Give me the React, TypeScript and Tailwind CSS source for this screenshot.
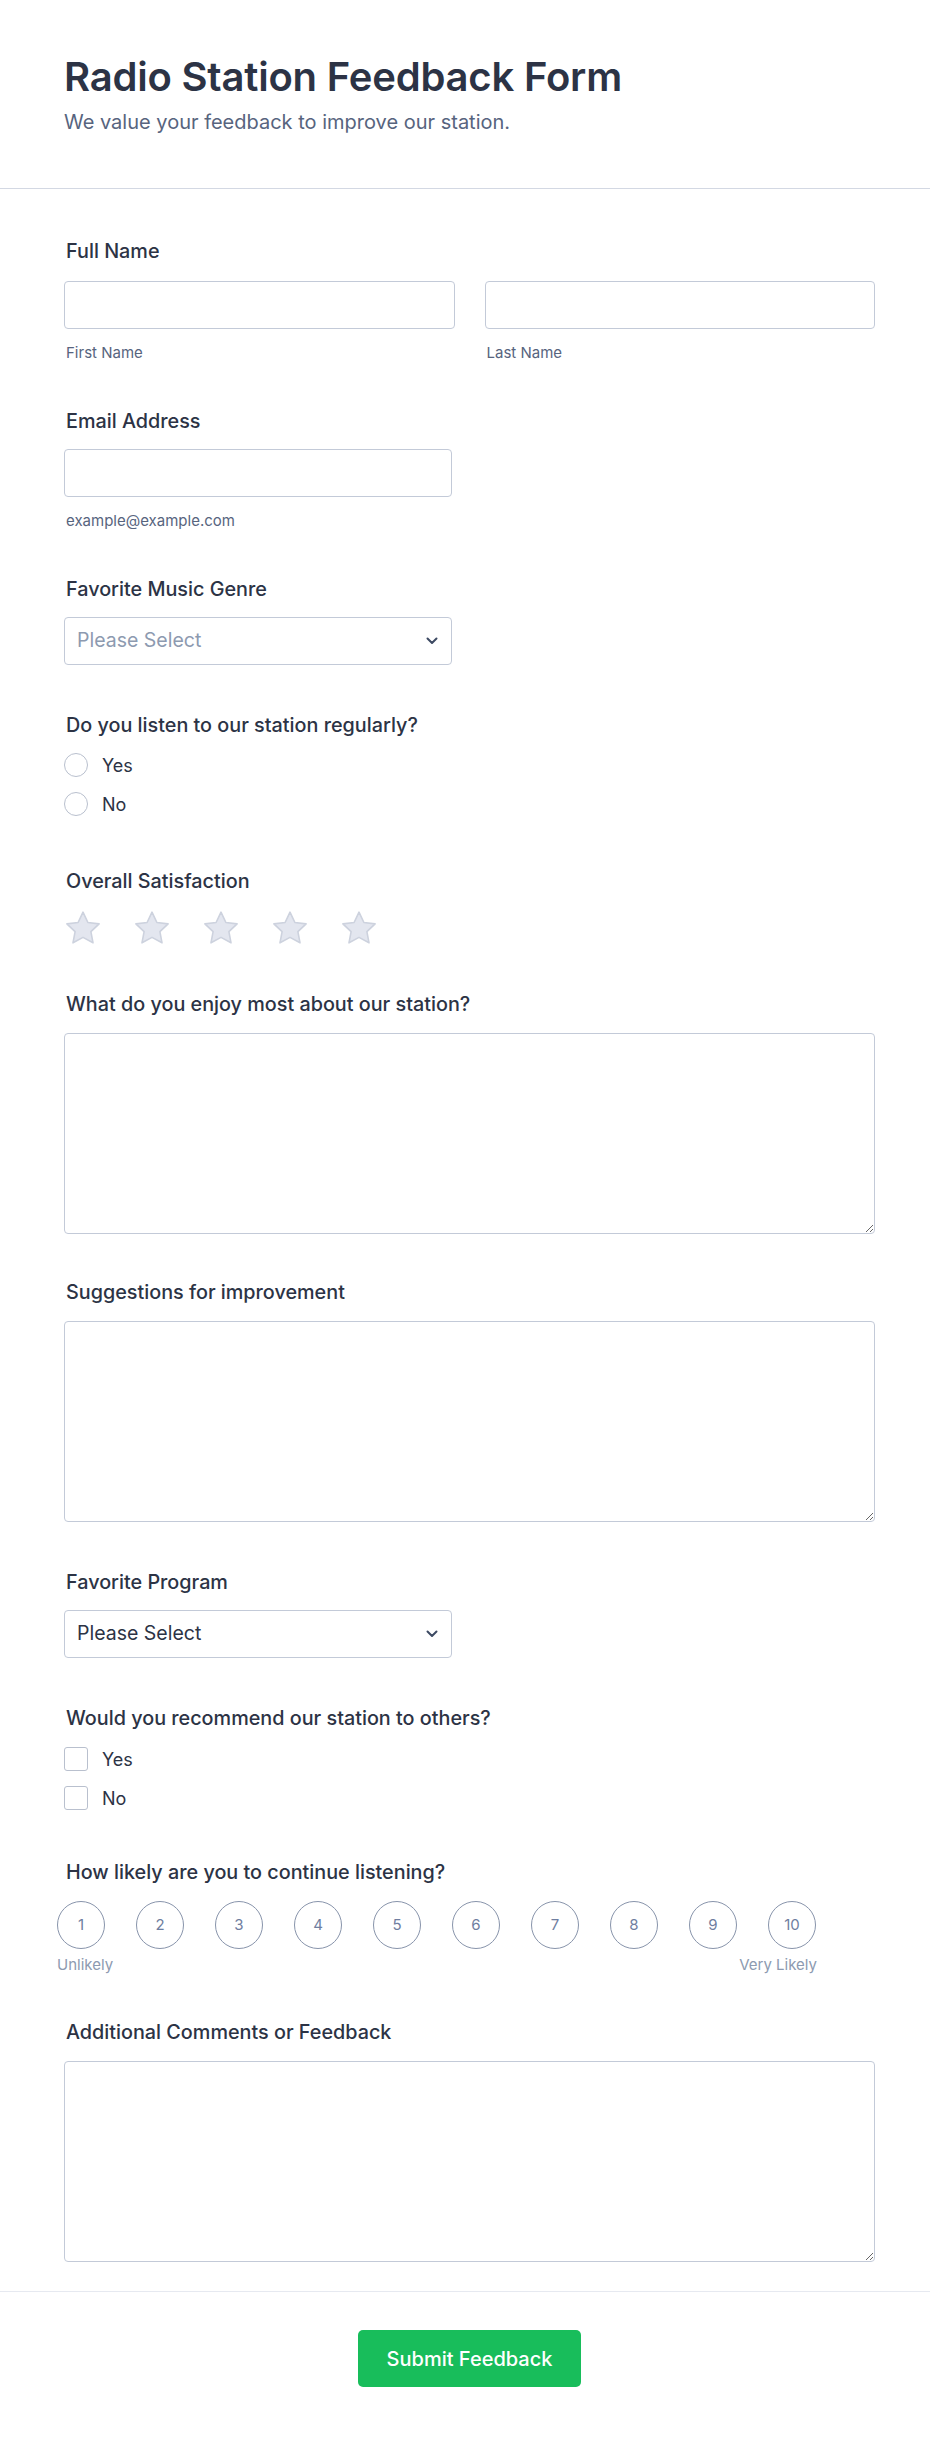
import React from "react";

const Label = ({ children, className = "" }: { children: React.ReactNode; className?: string }) => (
  <div className={`pl-0.5 text-[19.8px] leading-6 font-medium text-[#2c3345] ${className}`}>{children}</div>
);

const Chevron = () => (
  <svg width="12" height="8" viewBox="0 0 12 8" fill="none" className="absolute right-[14px] top-1/2 -translate-y-1/2">
    <path d="M1.5 1.5L6 6L10.5 1.5" stroke="#3d4a63" strokeWidth="2" strokeLinecap="round" strokeLinejoin="round" />
  </svg>
);

const Star = () => (
  <svg width="38" height="36" viewBox="0 0 38 36">
    <path
      d="M19 2.2l4.9 10.3 11.2 1.4-8.2 7.8 2.1 11.1L19 27.4 9 32.8l2.1-11.1-8.2-7.8 11.2-1.4z"
      fill="#e3e6ef"
      stroke="#cdd2de"
      strokeWidth="1.6"
      strokeLinejoin="round"
    />
  </svg>
);

const inputCls = "h-12 w-full rounded-[4px] border border-[#c3cad8] bg-white px-3 text-[19.5px] outline-none";
const subCls = "mt-[14px] pl-0.5 text-[15px] leading-5 text-[#57647e]";
const areaCls = "mt-[17px] block h-[201px] w-full rounded-[4px] border border-[#c3cad8] outline-none";

export default function App() {
  return (
    <div className="min-h-screen bg-white font-['Inter',sans-serif]">
      {/* Header */}
      <div className="border-b border-[#d3d8e3] pl-16 pr-[55px] pt-[53px] pb-[52px]">
        <h1 className="text-[40px] leading-[48px] font-semibold text-[#2c3345] tracking-[-0.2px]">Radio Station Feedback Form</h1>
        <p className="mt-[7px] text-[20px] leading-7 text-[#57647e]">We value your feedback to improve our station.</p>
      </div>

      {/* Form */}
      <div className="pl-16 pr-[55px] pt-[50px] pb-[29px]">
        {/* Full Name */}
        <Label>Full Name</Label>
        <div className="mt-[18px] grid grid-cols-2 gap-[30px]">
          <div>
            <input className={inputCls} />
            <div className={subCls}>First Name</div>
          </div>
          <div>
            <input className={inputCls} />
            <div className={subCls}>Last Name</div>
          </div>
        </div>

        {/* Email */}
        <Label className="mt-[46px]">Email Address</Label>
        <div className="mt-4 w-[388px]">
          <input className={inputCls} />
          <div className={subCls}>example@example.com</div>
        </div>

        {/* Genre */}
        <Label className="mt-[46px]">Favorite Music Genre</Label>
        <div className="relative mt-4 w-[388px]">
          <div className={`${inputCls} flex items-center text-[#8d9ab0]`}>Please Select</div>
          <Chevron />
        </div>

        {/* Radio */}
        <Label className="mt-[48px]">Do you listen to our station regularly?</Label>
        <div className="mt-4 flex flex-col gap-[15px]">
          {["Yes", "No"].map((o) => (
            <div key={o} className="flex h-6 items-center gap-[14px]">
              <span className="h-6 w-6 rounded-full border border-[#b9c0ce] bg-white" />
              <span className="text-[18px] text-[#2c3345]">{o}</span>
            </div>
          ))}
        </div>

        {/* Stars */}
        <Label className="mt-[53px]">Overall Satisfaction</Label>
        <div className="mt-[17px] flex gap-[31px]">
          {[1, 2, 3, 4, 5].map((i) => (
            <Star key={i} />
          ))}
        </div>

        {/* Enjoy */}
        <Label className="mt-[46px]">What do you enjoy most about our station?</Label>
        <textarea className={areaCls} />

        {/* Suggestions */}
        <Label className="mt-[46px]">Suggestions for improvement</Label>
        <textarea className={areaCls} />

        {/* Program */}
        <Label className="mt-[48px]">Favorite Program</Label>
        <div className="relative mt-4 w-[388px]">
          <div className={`${inputCls} flex items-center text-[#2c3345]`}>Please Select</div>
          <Chevron />
        </div>

        {/* Checkbox */}
        <Label className="mt-[48px]">Would you recommend our station to others?</Label>
        <div className="mt-[17px] flex flex-col gap-[15px]">
          {["Yes", "No"].map((o) => (
            <div key={o} className="flex h-6 items-center gap-[14px]">
              <span className="h-6 w-6 rounded-[3px] border border-[#b9c0ce] bg-white" />
              <span className="text-[18px] text-[#2c3345]">{o}</span>
            </div>
          ))}
        </div>

        {/* Scale */}
        <Label className="mt-[50px]">How likely are you to continue listening?</Label>
        <div className="-ml-[7px] mt-[17px] w-[760px]">
          <div className="flex gap-[31px]">
            {[1, 2, 3, 4, 5, 6, 7, 8, 9, 10].map((n) => (
              <div
                key={n}
                className="flex h-12 w-12 items-center justify-center rounded-full border border-[#8894ab] text-[15px] text-[#6f7ea0]"
              >
                {n}
              </div>
            ))}
          </div>
          <div className="mt-[6px] flex justify-between text-[15px] leading-5 text-[#8d9ab0]">
            <span>Unlikely</span>
            <span>Very Likely</span>
          </div>
        </div>

        {/* Additional */}
        <Label className="mt-[45px]">Additional Comments or Feedback</Label>
        <textarea className={areaCls} />
      </div>

      {/* Footer */}
      <div className="flex justify-center border-t border-[#e6e9f0] pl-16 pr-[55px] pt-[38px] pb-[51px]">
        <button className="h-[57px] w-[223px] rounded-[5px] bg-[#18bd5b] text-[20px] font-medium text-white">
          Submit Feedback
        </button>
      </div>
    </div>
  );
}
